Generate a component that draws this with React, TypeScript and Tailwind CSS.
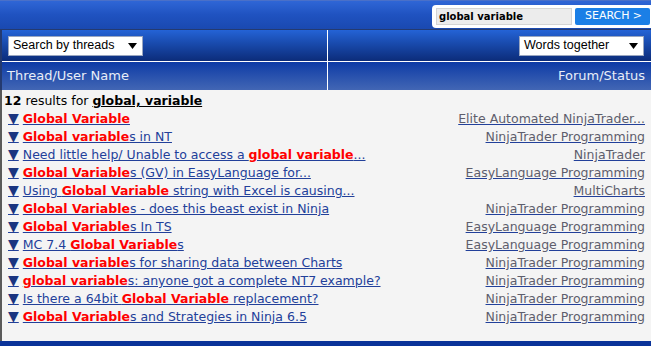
import React from "react";

type Part = { t: string; hi?: boolean };

const rows: { title: Part[]; forum: string }[] = [
    { title: [{ t: "Global Variable", hi: true }], forum: "Elite Automated NinjaTrader..." },
    { title: [{ t: "Global variable", hi: true }, { t: "s in NT" }], forum: "NinjaTrader Programming" },
    {
        title: [{ t: "Need little help/ Unable to access a " }, { t: "global variable", hi: true }, { t: "..." }],
        forum: "NinjaTrader",
    },
    {
        title: [{ t: "Global Variable", hi: true }, { t: "s (GV) in EasyLanguage for..." }],
        forum: "EasyLanguage Programming",
    },
    {
        title: [{ t: "Using " }, { t: "Global Variable", hi: true }, { t: " string with Excel is causing..." }],
        forum: "MultiCharts",
    },
    {
        title: [{ t: "Global Variable", hi: true }, { t: "s - does this beast exist in Ninja" }],
        forum: "NinjaTrader Programming",
    },
    { title: [{ t: "Global Variable", hi: true }, { t: "s In TS" }], forum: "EasyLanguage Programming" },
    { title: [{ t: "MC 7.4 " }, { t: "Global Variable", hi: true }, { t: "s" }], forum: "EasyLanguage Programming" },
    {
        title: [{ t: "Global variable", hi: true }, { t: "s for sharing data between Charts" }],
        forum: "NinjaTrader Programming",
    },
    {
        title: [{ t: "global variable", hi: true }, { t: "s: anyone got a complete NT7 example?" }],
        forum: "NinjaTrader Programming",
    },
    {
        title: [{ t: "Is there a 64bit " }, { t: "Global Variable", hi: true }, { t: " replacement?" }],
        forum: "NinjaTrader Programming",
    },
    {
        title: [{ t: "Global Variable", hi: true }, { t: "s and Strategies in Ninja 6.5" }],
        forum: "NinjaTrader Programming",
    },
];

function Select({ label, width }: { label: string; width: string }) {
    return (
        <div
            className={`flex items-center justify-between h-[20px] bg-white border border-[#9aa6c0] pl-[4px] pr-[5px] font-['Liberation_Sans',sans-serif] text-[12.5px] text-black whitespace-nowrap ${width}`}
        >
            <span>{label}</span>
            <svg className="shrink-0" width="9" height="6" viewBox="0 0 9 6">
                <path d="M0 0h9L4.5 6z" fill="#000" />
            </svg>
        </div>
    );
}

export default function App() {
    return (
        <div className="w-[651px] h-[346px] flex flex-col bg-[#f4f4f4] font-['DejaVu_Sans',sans-serif] overflow-hidden">
            {/* search bar */}
            <div className="h-[29px] flex items-center justify-end pt-[2px] bg-gradient-to-b from-[#2f66d6] via-[#1f52c0] to-[#1a49b0] border-t border-[#4a70c8]">
                <div className="flex items-center gap-[3px] bg-white rounded-l-[4px] pl-[4px] pr-[1px] h-[23px] w-[219px]">
                    <div className="w-[136px] h-[17px] bg-[#ececec] border border-[#d4d4d4] flex items-center pl-[2px] text-[10px] font-bold text-black">
                        global variable
                    </div>
                    <div className="w-[75px] h-[17px] bg-[#1b7fe6] rounded-[2px] flex items-center justify-between pl-[10px] pr-[8px] text-[11px] text-white">
                        <span>SEARCH</span>
                        <span>&gt;</span>
                    </div>
                </div>
            </div>

            {/* table head */}
            <div className="border-l-[2px] border-t border-[#243a70] bg-white">
                <div className="grid grid-cols-[325px_1fr] gap-x-px">
                    <div className="h-[31px] flex items-center pl-[6px] bg-gradient-to-b from-[#2463d6] to-[#0c2c7a]">
                        <Select label="Search by threads" width="w-[135px]" />
                    </div>
                    <div className="h-[31px] flex items-center justify-end pr-[7px] bg-gradient-to-b from-[#2463d6] to-[#0c2c7a]">
                        <Select label="Words together" width="w-[125px]" />
                    </div>
                </div>
                <div className="grid grid-cols-[325px_1fr] gap-x-px mt-px">
                    <div className="h-[28px] flex items-center pl-[5px] text-[13px] text-[#e8eef8] bg-gradient-to-b from-[#0c3aa6] to-[#4266b4]">
                        Thread/User Name
                    </div>
                    <div className="h-[28px] flex items-center justify-end pr-[6px] text-[13px] text-[#e8eef8] bg-gradient-to-b from-[#0c3aa6] to-[#4266b4]">
                        Forum/Status
                    </div>
                </div>
            </div>

            {/* results */}
            <div className="flex-1 border-l-[2px] border-[#5a5a5a] pl-[2px] pr-[6px] pt-[2px] text-[12.5px] leading-[18px]">
                <div className="h-[18px] text-black">
                    <b>12</b> results for <b className="underline">global, variable</b>
                </div>
                {rows.map((r, i) => (
                    <div key={i} className="h-[18px] flex justify-between">
                        <a className="pl-[4px] text-[#22409a] underline decoration-[#22409a] whitespace-nowrap">
                            <span className="text-[14px] leading-[10px] text-[#1a3580] mr-[4px]">▼</span>
                            {r.title.map((p, j) =>
                                p.hi ? (
                                    <b key={j} className="text-[#ff0000]">
                                        {p.t}
                                    </b>
                                ) : (
                                    <span key={j}>{p.t}</span>
                                )
                            )}
                        </a>
                        <a className="text-[#5e5e6c] underline decoration-[#22409a] whitespace-nowrap">{r.forum}</a>
                    </div>
                ))}
            </div>

            <div className="h-[5px] bg-[#0a3399]" />
        </div>
    );
}
